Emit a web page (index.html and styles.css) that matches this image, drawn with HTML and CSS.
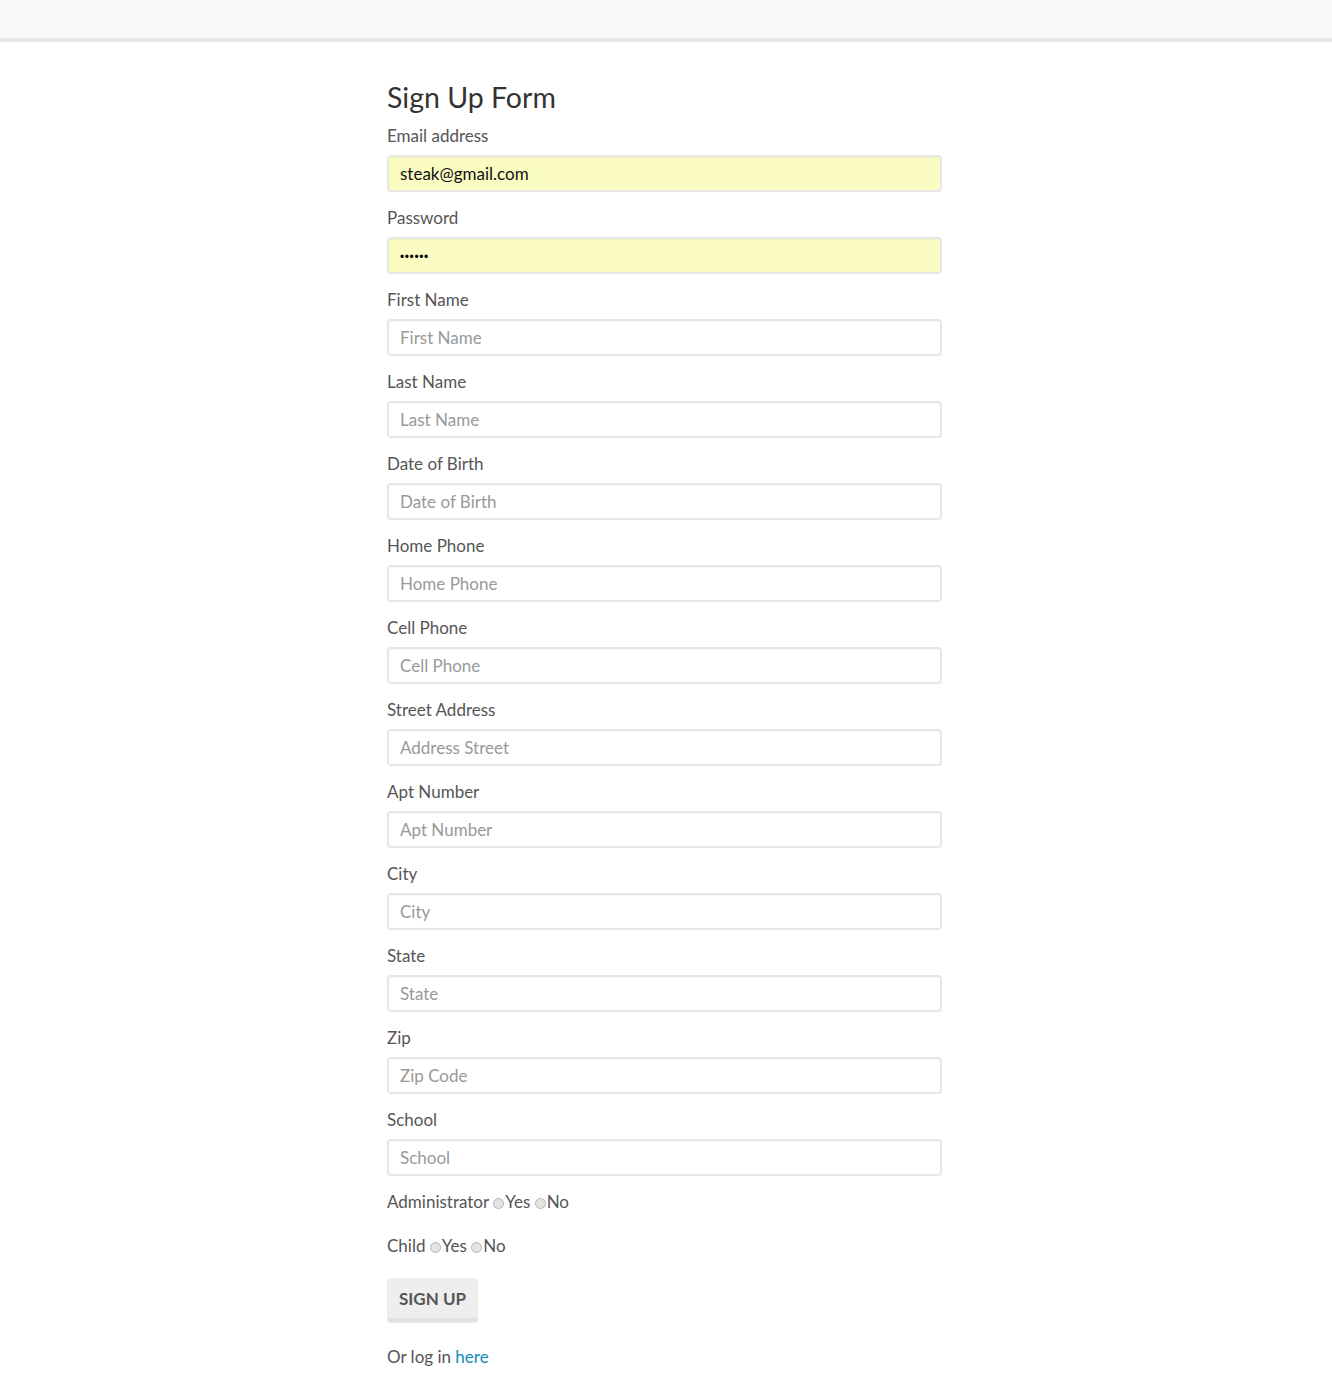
FILE: index.html
```html
<!DOCTYPE html>
<html>
<head>
<meta charset="utf-8">
<title>Sign Up</title>
<link rel="stylesheet" href="styles.css">
</head>
<body>
<header class="navbar"></header>
<main class="page">
  <form class="signup">
    <h2 class="title">Sign Up Form</h2>
    <div class="group">
      <label class="label">Email address</label>
      <input class="field filled" type="email" value="steak@gmail.com">
    </div>
    <div class="group">
      <label class="label">Password</label>
      <input class="field filled password" type="password" value="secret">
    </div>
    <div class="group">
      <label class="label">First Name</label>
      <input class="field" type="text" placeholder="First Name">
    </div>
    <div class="group">
      <label class="label">Last Name</label>
      <input class="field" type="text" placeholder="Last Name">
    </div>
    <div class="group">
      <label class="label">Date of Birth</label>
      <input class="field" type="text" placeholder="Date of Birth">
    </div>
    <div class="group">
      <label class="label">Home Phone</label>
      <input class="field" type="text" placeholder="Home Phone">
    </div>
    <div class="group">
      <label class="label">Cell Phone</label>
      <input class="field" type="text" placeholder="Cell Phone">
    </div>
    <div class="group">
      <label class="label">Street Address</label>
      <input class="field" type="text" placeholder="Address Street">
    </div>
    <div class="group">
      <label class="label">Apt Number</label>
      <input class="field" type="text" placeholder="Apt Number">
    </div>
    <div class="group">
      <label class="label">City</label>
      <input class="field" type="text" placeholder="City">
    </div>
    <div class="group">
      <label class="label">State</label>
      <input class="field" type="text" placeholder="State">
    </div>
    <div class="group">
      <label class="label">Zip</label>
      <input class="field" type="text" placeholder="Zip Code">
    </div>
    <div class="group">
      <label class="label">School</label>
      <input class="field" type="text" placeholder="School">
    </div>
    <div class="radio-row">Administrator <input class="radio" type="radio" name="admin">Yes <input class="radio" type="radio" name="admin">No</div>
    <div class="radio-row">Child <input class="radio" type="radio" name="child">Yes <input class="radio" type="radio" name="child">No</div>
    <button class="btn" type="button">Sign Up</button>
    <p class="login">Or log in <a href="#" class="link">here</a></p>
  </form>
</main>
</body>
</html>
```

FILE: styles.css
```css
html, body {
  margin: 0;
  padding: 0;
  background: #fff;
}
body {
  font-family: Lato, "Liberation Sans", sans-serif;
  color: #555;
  font-size: 17px;
}
.navbar {
  height: 38px;
  background: #f8f8f8;
  border-bottom: 4px solid #e7e7e7;
}
.page {
  padding-top: 37px;
}
.signup {
  width: 555px;
  margin-left: calc(50% - 279px);
}
.title {
  margin: 0 0 10px;
  font-size: 28.5px;
  line-height: 36px;
  font-weight: 400;
  color: #333;
}
.group {
  display: flex;
  flex-direction: column;
  margin-bottom: 15px;
}
.label {
  font-size: 17px;
  line-height: 22px;
  margin-bottom: 8px;
  color: #555;
}
.field {
  box-sizing: border-box;
  height: 37px;
  width: 100%;
  border: 2px solid #e7e7e7;
  border-radius: 4px;
  padding: 0 11px;
  font-family: inherit;
  font-size: 17px;
  color: #222;
  background: #fff;
  box-shadow: inset 0 1px 0 rgba(0,0,0,0.03);
  outline: none;
}
.field::placeholder {
  color: #999;
}
.filled {
  background: #fafcc2;
  color: #111;
}
.password {
  font-family: "Liberation Sans", sans-serif;
  font-size: 12px;
  letter-spacing: 0.6px;
  padding-top: 3px;
  color: #000;
}
.radio-row {
  font-size: 17px;
  line-height: 22px;
  margin-bottom: 22px;
  color: #555;
  display: flex;
  align-items: center;
  white-space: pre;
}
.radio {
  appearance: none;
  -webkit-appearance: none;
  width: 11px;
  height: 11px;
  margin: 3px 1px 0 0;
  border: 1px solid #b5b5b5;
  border-radius: 50%;
  background: #e4e4e4;
  box-sizing: border-box;
}
.btn {
  display: block;
  height: 44px;
  padding: 0 12px;
  margin-top: -1px;
  font-family: inherit;
  font-size: 17px;
  font-weight: 700;
  text-transform: uppercase;
  color: #555;
  background: #eee;
  border: none;
  border-bottom: 4px solid #e2e2e2;
  border-radius: 4px;
  box-shadow: 0 1px 0 #e8e8e8;
}
.login {
  margin: 24px 0 0;
  font-size: 17px;
  line-height: 22px;
  color: #555;
}
.link {
  color: #158cba;
  text-decoration: none;
}
```
